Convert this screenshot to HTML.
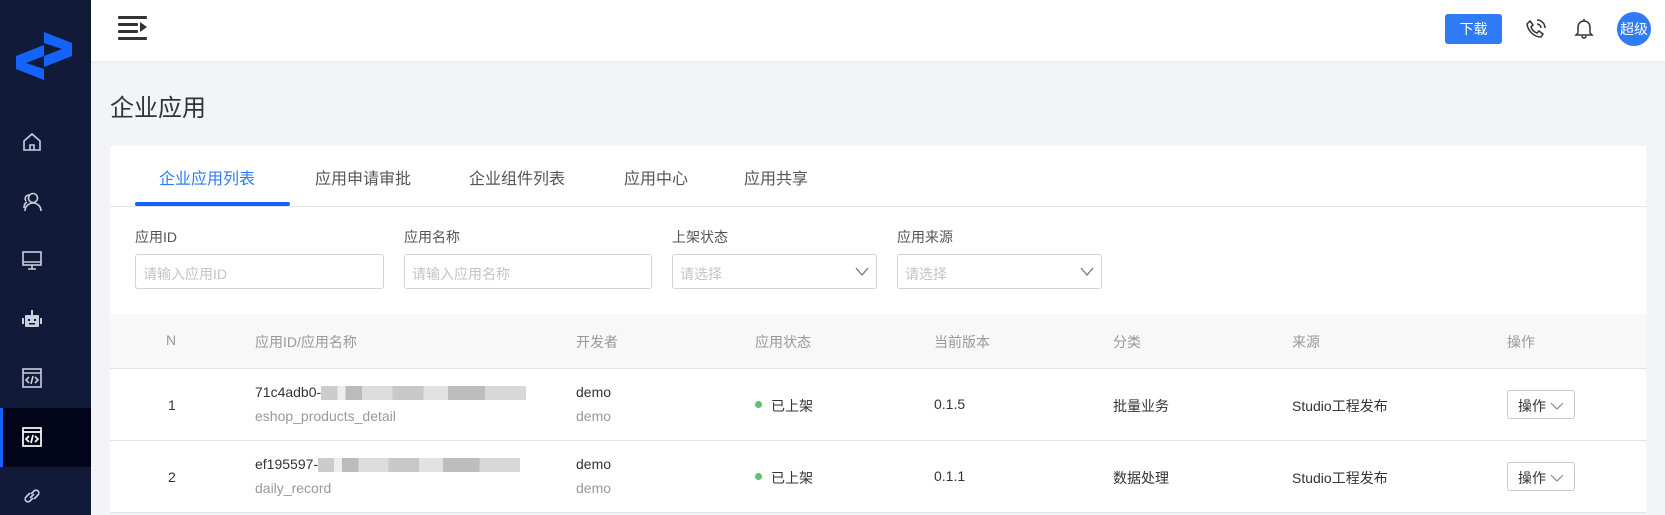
<!DOCTYPE html>
<html><head><meta charset="utf-8"><style>
*{box-sizing:border-box;margin:0;padding:0}
body{width:1665px;height:515px;overflow:hidden;background:#f3f4f7;font-family:"Liberation Sans","Noto Sans CJK SC",sans-serif;font-size:14px;color:#333;position:relative}
.abs{position:absolute}
.side{left:0;top:0;width:91px;height:515px;background:#111a38}
.hdr{left:91px;top:0;width:1574px;height:61px;background:#fff;box-shadow:0 1px 4px rgba(0,0,0,.05)}
.card{left:110px;top:146px;width:1536px;height:168px;background:#fff}
.t{white-space:nowrap}
.inp{border:1px solid #d3d4d8;border-radius:3px;height:35px;top:254px;background:#fff;color:#c4c4c4;padding:9px 7px;font-size:14px}
.chev{position:absolute;right:6px;top:8px}
.th{top:314px;left:110px;width:1536px;height:55px;background:#f8f8f9;border-bottom:1px solid #e3e4e7}
.row{left:110px;width:1536px;height:72px;background:#fff;border-bottom:1px solid #e3e4e7}
.gray{color:#999}
.blur{display:inline-block;height:14px;vertical-align:middle;background:linear-gradient(90deg,#ccc 0 8%,#eee 8% 12%,#bbb 12% 20%,#ddd 20% 35%,#c8c8c8 35% 50%,#e2e2e2 50% 62%,#bdbdbd 62% 80%,#d8d8d8 80% 100%)}
.btn{border:1px solid #c9cacd;border-radius:3px;width:68px;height:29px;padding:5px 10px;font-size:14px;color:#333;background:#fff}
</style></head><body>
<div class="abs side">
 <svg class="abs" style="left:16px;top:32px" width="56" height="48" viewBox="0 0 56 48"><polygon points="28,0 56,11 56,24 28,35 28,24 46,17 28,11" fill="#1463ff"/><polygon points="0,24 28,13 28,24 10,31 28,37 28,48 0,37" fill="#1463ff"/></svg>
 <svg class="abs" style="left:22px;top:132px" width="20" height="20" viewBox="0 0 20 20" fill="none" stroke="#c9cfe0" stroke-width="1.6"><path d="M2 9L10 2l8 7v9H2z M8 18v-5h4v5"/></svg>
 <svg class="abs" style="left:22px;top:192px" width="21" height="20" viewBox="0 0 21 20" fill="none" stroke="#c9cfe0" stroke-width="1.6"><circle cx="11" cy="6" r="4.5"/><path d="M3 19c0-5 4-8 8-8s8 3 8 8M7 3C4 3 2 6 4 9 M2 16c0-3 1-5 3-6"/></svg>
 <svg class="abs" style="left:22px;top:251px" width="20" height="19" viewBox="0 0 20 19" fill="none" stroke="#c9cfe0" stroke-width="1.6"><rect x="1" y="1" width="18" height="13"/><path d="M1 11h18M6 18h8M10 14v4"/></svg>
 <svg class="abs" style="left:22px;top:310px" width="20" height="18" viewBox="0 0 20 18" fill="#c9cfe0"><rect x="3" y="5" width="14" height="12" rx="1"/><rect x="9" y="0" width="2" height="5"/><rect x="0" y="8" width="2" height="6"/><rect x="18" y="8" width="2" height="6"/><rect x="6" y="9" width="2" height="2" fill="#111a38"/><rect x="12" y="9" width="2" height="2" fill="#111a38"/><rect x="7" y="13" width="6" height="1.5" fill="#111a38"/></svg>
 <svg class="abs" style="left:22px;top:368px" width="20" height="20" viewBox="0 0 20 20" fill="none" stroke="#c9cfe0" stroke-width="1.6"><rect x="1" y="1" width="18" height="18"/><path d="M1 5h18M7 9l-3 3 3 3M13 9l3 3-3 3M11 8l-2 8"/></svg>
 <div class="abs" style="left:0;top:408px;width:91px;height:59px;background:#03061a"></div>
 <div class="abs" style="left:0;top:408px;width:3px;height:59px;background:#1463ff"></div>
 <svg class="abs" style="left:22px;top:427px" width="20" height="20" viewBox="0 0 20 20" fill="none" stroke="#fff" stroke-width="1.7"><rect x="1" y="1" width="18" height="18"/><path d="M1 5h18M7 9l-3 3 3 3M13 9l3 3-3 3M11 8l-2 8"/></svg>
 <svg class="abs" style="left:22px;top:487px" width="20" height="18" viewBox="0 0 20 18" fill="none" stroke="#c9cfe0" stroke-width="1.6"><path d="M8 6l-4 4a2.5 2.5 0 004 4l3-3M12 12l4-4a2.5 2.5 0 00-4-4l-3 3M8 11l4-4"/></svg>
</div>
<div class="abs hdr">
 <svg class="abs" style="left:27px;top:16px" width="30" height="25" viewBox="0 0 30 25" fill="#333"><rect x="0" y="0" width="29" height="3" rx="1"/><rect x="0" y="7" width="20" height="3" rx="1"/><rect x="0" y="14" width="20" height="3" rx="1"/><rect x="0" y="21" width="29" height="3" rx="1"/><polygon points="22,6 29,11 22,16"/></svg>
 <div class="abs t" style="left:1354px;top:14px;width:57px;height:30px;background:#2f7bf5;border-radius:3px;color:#fff;text-align:center;line-height:30px;font-size:14px">下载</div>
 <svg class="abs" style="left:1435px;top:19px" width="20" height="20" viewBox="0 0 20 20" fill="none" stroke="#333" stroke-width="1.5"><path d="M4 2l3 4-2 2c1 3 3 5 6 6l2-2 4 3-2 3C8 18 2 12 1 5z M11 5a4 4 0 014 4 M11 1a8 8 0 018 8"/></svg>
 <svg class="abs" style="left:1483px;top:18px" width="20" height="21" viewBox="0 0 20 21" fill="none" stroke="#333" stroke-width="1.5"><path d="M4 15V9a6 6 0 0112 0v6l2 2H2z M8 18a2 2 0 004 0 M10 1v2"/></svg>
 <div class="abs t" style="left:1526px;top:12px;width:34px;height:34px;border-radius:50%;background:#2f7bf5;color:#fff;text-align:center;line-height:34px;font-size:14px">超级</div>
</div>
<div class="abs t" style="left:110px;top:88px;font-size:24px;color:#333">企业应用</div>
<div class="abs card">
 <div class="abs" style="left:0;top:60px;width:1536px;height:1px;background:#e3e4e7"></div>
 <div class="abs" style="left:25px;top:56px;width:155px;height:4px;background:#1463ff;border-radius:2px"></div>
 <div class="abs t" style="left:49px;top:19px;font-size:16px;color:#2f7bf5">企业应用列表</div>
 <div class="abs t" style="left:205px;top:19px;font-size:16px;color:#555">应用申请审批</div>
 <div class="abs t" style="left:359px;top:19px;font-size:16px;color:#555">企业组件列表</div>
 <div class="abs t" style="left:514px;top:19px;font-size:16px;color:#555">应用中心</div>
 <div class="abs t" style="left:634px;top:19px;font-size:16px;color:#555">应用共享</div>
 <div class="abs t" style="left:25px;top:81px;color:#555">应用ID</div>
 <div class="abs t" style="left:294px;top:81px;color:#555">应用名称</div>
 <div class="abs t" style="left:562px;top:81px;color:#555">上架状态</div>
 <div class="abs t" style="left:787px;top:81px;color:#555">应用来源</div>
</div>
<div class="abs inp t" style="left:135px;width:249px">请输入应用ID</div>
<div class="abs inp t" style="left:404px;width:248px">请输入应用名称</div>
<div class="abs inp t" style="left:672px;width:205px">请选择<svg class="chev" width="16" height="16" viewBox="0 0 16 16" fill="none" stroke="#777" stroke-width="1.3"><path d="M2 5l6 7 6-7"/></svg></div>
<div class="abs inp t" style="left:897px;width:205px">请选择<svg class="chev" width="16" height="16" viewBox="0 0 16 16" fill="none" stroke="#777" stroke-width="1.3"><path d="M2 5l6 7 6-7"/></svg></div>
<div class="abs th"></div>
<div class="abs t gray" style="left:166px;top:332px">N</div>
<div class="abs t gray" style="left:255px;top:332px">应用ID/应用名称</div>
<div class="abs t gray" style="left:576px;top:332px">开发者</div>
<div class="abs t gray" style="left:755px;top:332px">应用状态</div>
<div class="abs t gray" style="left:934px;top:332px">当前版本</div>
<div class="abs t gray" style="left:1113px;top:332px">分类</div>
<div class="abs t gray" style="left:1292px;top:332px">来源</div>
<div class="abs t gray" style="left:1507px;top:332px">操作</div>
<div class="abs row" style="top:369px"></div>
<div class="abs row" style="top:441px"></div>
<div class="abs t" style="left:168px;top:397px">1</div>
<div class="abs t" style="left:255px;top:384px">71c4adb0-<span class="blur" style="width:205px"></span></div>
<div class="abs t gray" style="left:255px;top:408px">eshop_products_detail</div>
<div class="abs t" style="left:576px;top:384px">demo</div>
<div class="abs t gray" style="left:576px;top:408px">demo</div>
<div class="abs" style="left:755px;top:401px;width:7px;height:7px;border-radius:50%;background:#5cc26f"></div>
<div class="abs t" style="left:771px;top:396px">已上架</div>
<div class="abs t" style="left:934px;top:396px">0.1.5</div>
<div class="abs t" style="left:1113px;top:396px">批量业务</div>
<div class="abs t" style="left:1292px;top:396px">Studio工程发布</div>
<div class="abs btn t" style="left:1507px;top:390px">操作<svg style="margin-left:4px;vertical-align:-1px" width="14" height="12" viewBox="0 0 14 12" fill="none" stroke="#888" stroke-width="1.2"><path d="M1 3l6 6 6-6"/></svg></div>
<div class="abs t" style="left:168px;top:469px">2</div>
<div class="abs t" style="left:255px;top:456px">ef195597-<span class="blur" style="width:202px"></span></div>
<div class="abs t gray" style="left:255px;top:480px">daily_record</div>
<div class="abs t" style="left:576px;top:456px">demo</div>
<div class="abs t gray" style="left:576px;top:480px">demo</div>
<div class="abs" style="left:755px;top:473px;width:7px;height:7px;border-radius:50%;background:#5cc26f"></div>
<div class="abs t" style="left:771px;top:468px">已上架</div>
<div class="abs t" style="left:934px;top:468px">0.1.1</div>
<div class="abs t" style="left:1113px;top:468px">数据处理</div>
<div class="abs t" style="left:1292px;top:468px">Studio工程发布</div>
<div class="abs btn t" style="left:1507px;top:462px">操作<svg style="margin-left:4px;vertical-align:-1px" width="14" height="12" viewBox="0 0 14 12" fill="none" stroke="#888" stroke-width="1.2"><path d="M1 3l6 6 6-6"/></svg></div>
</body></html>
